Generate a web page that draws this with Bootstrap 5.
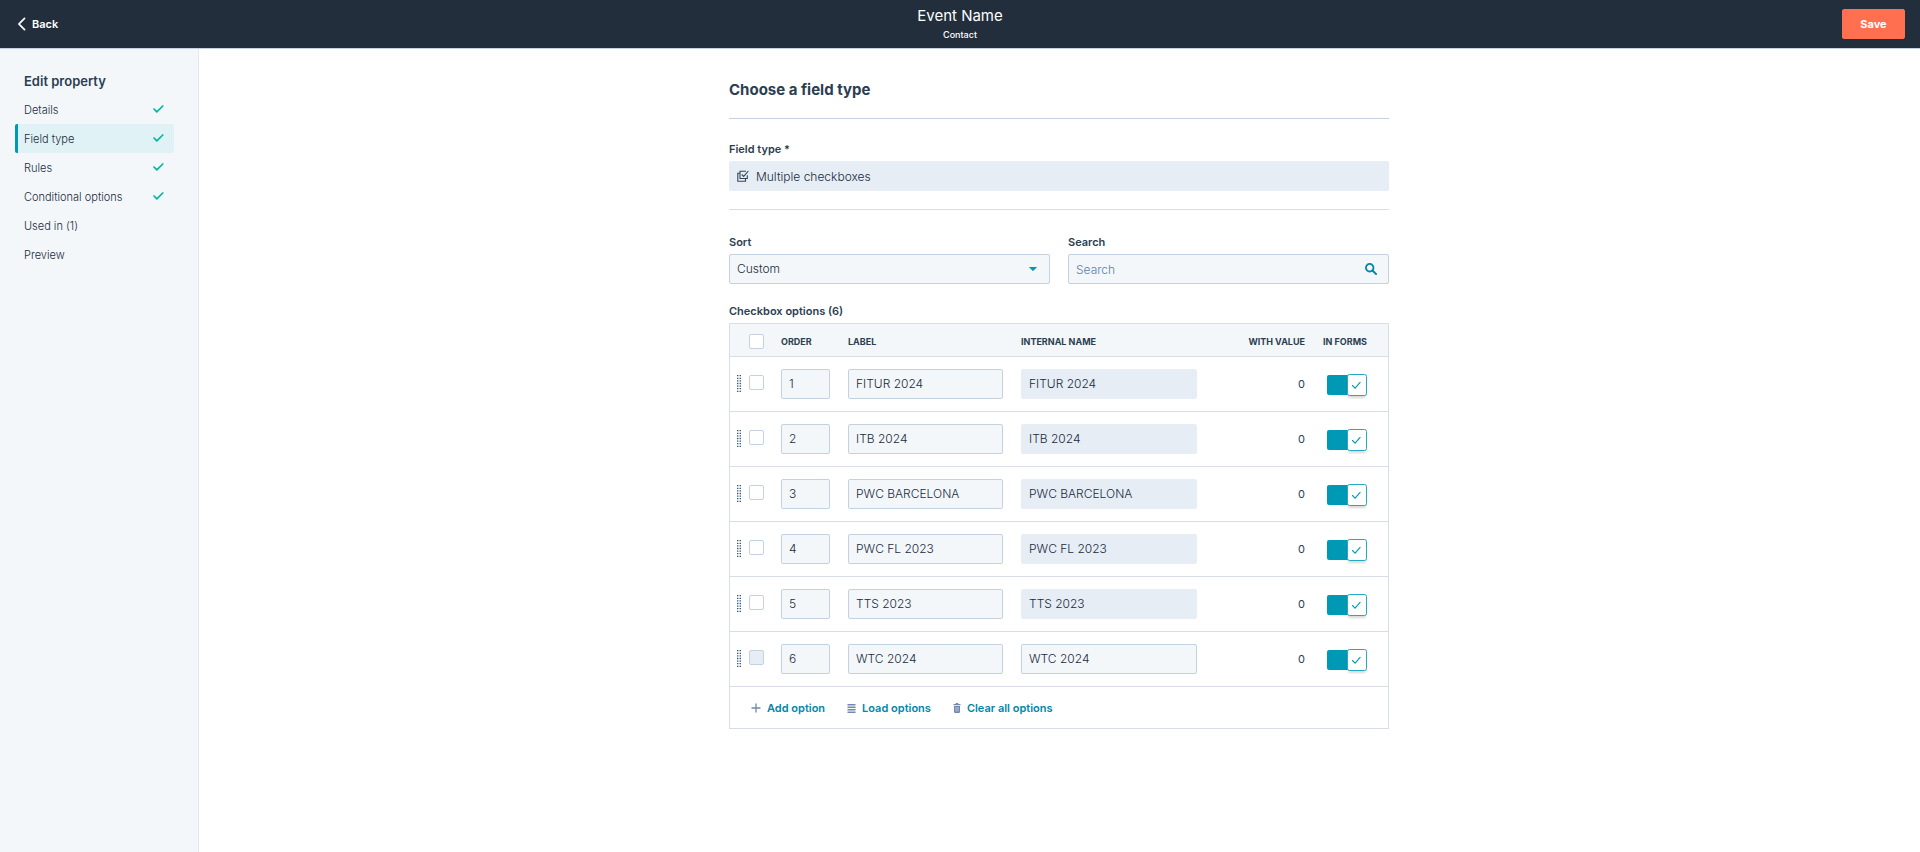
<!DOCTYPE html>
<html lang="en">
<head>
<meta charset="utf-8">
<meta name="viewport" content="width=device-width, initial-scale=1">
<title>Edit property</title>
<link href="https://cdn.jsdelivr.net/npm/bootstrap@5.3.0/dist/css/bootstrap.min.css" rel="stylesheet">
<style>
  :root { --ink: #2b3e52; --soft-ink: #1a2c40; --line: #d9dde8; --edge: #c4d1e0; --pale: #f3f7fa; --mist: #e6edf5; --teal: #0099b5; --deep: #0086a8; }
  body { font-family: Inter, "Liberation Sans", sans-serif; font-size: 11px; line-height: 16px; color: var(--ink); background: #fff; }
  .topbar { background: #222e3c; border-bottom: 1px solid var(--edge); height: 49px; padding: 0 15px 0 18px; }
  .topbar-side { flex: 1 1 0; }
  .topbar-side:first-child { margin-right: -3px; }
  .back-link { font-weight: 600; color: #fff; text-decoration: none; gap: 6px; }
  .page-title { font-size: 15px; line-height: 20px; font-weight: 400; }
  .page-kind { font-size: 9px; line-height: 12px; font-weight: 500; margin: 3px 0 2px; }
  .save-btn { --bs-btn-color: #fff; --bs-btn-bg: #ff6f50; --bs-btn-border-color: #ff6f50; --bs-btn-hover-color: #fff; --bs-btn-hover-bg: #ff8a70; --bs-btn-hover-border-color: #ff8a70; --bs-btn-border-radius: 2px; font-size: 11px; line-height: 16px; font-weight: 700; padding: 6px 16px; min-width: 63px; }
  .sidebar { width: 199px; flex: none; background: var(--pale); border-right: 1px solid #e2e8ef; padding: 22px 24px 24px 15px; }
  .sidebar-title { font-size: 13px; line-height: 20px; font-weight: 600; padding-left: 9px; margin-bottom: 4px; }
  .step-link { color: var(--soft-ink); height: 29px; padding: 0 10px 0 6px; border-left: 3px solid transparent; border-radius: 2px; font-weight: 300; }
  .step-link:hover, .step-link:focus { color: var(--soft-ink); }
  .step-link.active { background: #e0f2f6; border-left-color: var(--teal); }
  .step-link svg { margin-bottom: 2px; }
  .editor-area { padding-right: 1px; }
  .editor { max-width: 660px; width: 100%; padding-top: 31px; }
  .editor-title { font-size: 15px; line-height: 20px; font-weight: 700; margin-bottom: 18px; }
  .rule { border-top: 1px solid var(--line); }
  .rule-strong { border-color: var(--edge); margin-bottom: 22px; }
  .rule-gap { margin-top: 18px; }
  .field-label { font-size: 11px; line-height: 16px; font-weight: 600; margin-bottom: 4px; display: block; }
  .list-label { margin-top: 19px; }
  .pair { --bs-gutter-x: 18px; }
  .field, .field:focus { height: 30px; padding: 0 7px; border: 1px solid var(--edge); border-radius: 2px; background-color: var(--pale); color: var(--soft-ink); font-size: 12px; line-height: 18px; font-weight: 300; box-shadow: none; }
  .field::placeholder { color: #5f80a6; opacity: 1; }
  .field-static, .field-static:focus { background-color: var(--mist); border-color: var(--mist); }
  .field-bare, .field-bare:focus { border: 0; background: transparent; padding: 0; }
  .type-icon { margin-right: 7px; }
  .field-select { background-image: url("data:image/svg+xml,%3Csvg xmlns='http://www.w3.org/2000/svg' viewBox='0 0 8 4'%3E%3Cpath fill='%230099b5' d='M.3 0h7.4q.3.2 0 .5L4.4 3.8q-.4.3-.8 0L.3.5Q0 .2.3 0z'/%3E%3C/svg%3E"); background-size: 8px 4px; background-position: right 12px center; }
  .options-card { border: 1px solid var(--line); }
  .options-table { table-layout: fixed; --bs-table-color: var(--ink); --bs-table-bg: transparent; border-color: var(--line); }
  .options-table > thead { background: var(--pale); }
  .options-table > :not(caption) > * > * { padding: 12px 9px; }
  .options-table > thead > tr > th { padding: 4px 9px 0; height: 32px; font-size: 9px; line-height: 12px; font-weight: 700; vertical-align: middle; text-transform: uppercase; white-space: nowrap; }
  .options-table > tbody > tr > td { vertical-align: middle; }
  .options-table > tbody > tr > td.pick-cell { padding: 18px 8px 0 7px; vertical-align: top; }
  .options-table > thead > tr > th.pick-cell { padding: 4px 8px 0 7px; }
  .options-table > tbody > tr > td.count-cell { font-weight: 400; }
  .col-pick { width: 42px; } .col-order { width: 67px; } .col-label { width: 173px; } .col-name { width: 194px; } .col-forms { width: 74px; }
  .tick { width: 15px; height: 15px; margin: 0; border: 1px solid var(--edge); border-radius: 2px !important; background-color: #fff; float: none; display: block; }
  .tick:disabled { background-color: var(--mist); opacity: 1; }
  .toggle { appearance: none; display: block; width: 40px; height: 30px; margin: 0 0 0 4px; border: 0; background: url("data:image/svg+xml,%3Csvg xmlns='http://www.w3.org/2000/svg' width='40' height='30'%3E%3Cdefs%3E%3Cfilter id='b' x='-30%25' y='-30%25' width='160%25' height='180%25'%3E%3CfeGaussianBlur stdDeviation='1.5'/%3E%3C/filter%3E%3C/defs%3E%3Crect y='6' width='26' height='20' rx='2' fill='%230099b5'/%3E%3Crect x='21' y='10' width='18' height='19' rx='2' fill='%23000' opacity='.16' filter='url(%23b)'/%3E%3Crect x='20.5' y='5.5' width='19' height='21' rx='2' fill='%23fff' stroke='%2326a8c0'/%3E%3Cpath d='M25.5 16.5l2.6 2.7 5-5.8' fill='none' stroke='%230099b5' stroke-width='1.1' stroke-linecap='round'/%3E%3C/svg%3E") no-repeat; }
  .toggle:not(:checked) { filter: grayscale(1); }
  .actions { height: 41px; padding: 2px 21px 0; gap: 22px; }
  .action-btn { --bs-btn-color: var(--deep); --bs-btn-hover-color: var(--teal); --bs-btn-padding-x: 0; --bs-btn-padding-y: 0; --bs-btn-border-width: 0; font-size: 11px; line-height: 16px; font-weight: 600; gap: 6px; }
</style>
</head>
<body class="d-flex flex-column min-vh-100">
<header class="topbar d-flex align-items-center text-white">
  <div class="topbar-side d-flex">
    <a href="#" class="back-link d-flex align-items-center">
      <svg width="8" height="14" viewBox="0 0 8 14" fill="none" stroke="#fff" stroke-width="1.7" stroke-linecap="round" aria-hidden="true"><path d="M6.500 1.300L1 7l5.500 5.700"/></svg>Back</a>
  </div>
  <div class="text-center">
    <h1 class="page-title mb-0">Event Name</h1>
    <div class="page-kind">Contact</div>
  </div>
  <div class="topbar-side d-flex justify-content-end">
    <button type="button" class="btn save-btn">Save</button>
  </div>
</header>

<div class="d-flex flex-grow-1">
  <nav class="sidebar" aria-label="Edit property">
    <h2 class="sidebar-title">Edit property</h2>
    <div class="nav flex-column" id="steps"></div>
  </nav>

  <main class="editor-area flex-grow-1 d-flex justify-content-center">
    <form class="editor">
      <h2 class="editor-title">Choose a field type</h2>
      <div class="rule rule-strong"></div>
      <label class="field-label" for="fieldType">Field type *</label>
      <div class="field field-static d-flex align-items-center">
        <svg class="flex-shrink-0 type-icon" width="12" height="12" viewBox="0 0 12 12" fill="none" stroke="#33475b" aria-hidden="true"><path d="M9 1.200H3v7.300h7.300V5.200M2.800 3.300H.8v7.900h7.700V8.800" stroke-width="1.100"/><path d="M4.700 4.500l2 1.900L11.400 1" stroke-width="1.100"/></svg>
        <input id="fieldType" class="field field-bare flex-grow-1" value="Multiple checkboxes" readonly>
      </div>
      <div class="rule rule-gap pt-4"></div>
      <div class="row pair">
        <div class="col">
          <label class="field-label" for="sort">Sort</label>
          <select id="sort" class="form-select field field-select"><option>Custom</option><option>Alphabetical</option></select>
        </div>
        <div class="col">
          <label class="field-label" for="search">Search</label>
          <div class="field d-flex align-items-center">
            <input id="search" type="text" class="field field-bare flex-grow-1" placeholder="Search">
            <svg class="me-1" width="12" height="12" viewBox="0 0 12 12" fill="none" stroke="#0086a8" aria-hidden="true"><circle cx="4.700" cy="4.700" r="3.800" stroke-width="1.800"/><path d="M7.500 7.500l3.600 3.600" stroke-width="2" stroke-linecap="round"/></svg>
          </div>
        </div>
      </div>
      <div class="field-label list-label">Checkbox options (6)</div>
      <div class="options-card">
        <table class="table options-table mb-0">
          <colgroup><col class="col-pick"><col class="col-order"><col class="col-label"><col class="col-name"><col><col class="col-forms"></colgroup>
          <thead>
            <tr>
              <th class="pick-cell"><input class="form-check-input tick ms-auto" type="checkbox" aria-label="Select all"></th>
              <th>Order</th><th>Label</th><th>Internal name</th><th class="text-end">With value</th><th>In forms</th>
            </tr>
          </thead>
          <tbody id="options"></tbody>
        </table>
        <div class="actions d-flex align-items-center">
          <button type="button" class="btn action-btn d-flex align-items-center"><svg width="10" height="10" viewBox="0 0 10 10" stroke="#7089ad" stroke-width="1.300" stroke-linecap="round" aria-hidden="true"><path d="M5 1v8M1 5h8"/></svg>Add option</button>
          <button type="button" class="btn action-btn d-flex align-items-center"><svg width="9" height="9" viewBox="0 0 9 9" stroke="#7089ad" stroke-width="1.500" aria-hidden="true"><path d="M.5.800h8M.5 3.300h8M.5 5.700h8M.5 8.200h8"/></svg>Load options</button>
          <button type="button" class="btn action-btn d-flex align-items-center"><svg width="8" height="10" viewBox="0 0 8 10" aria-hidden="true"><path fill="#7089ad" d="M2.700 0h2.600v1h2.200v1.300H.5V1h2.200zM1 3h6v5.800Q7 10 5.800 10H2.200Q1 10 1 8.800z"/><path d="M2.800 4v4.600M4 4v4.600M5.200 4v4.600" stroke="#fff" stroke-width=".4"/></svg>Clear all options</button>
        </div>
      </div>
    </form>
  </main>
</div>

<script>
  const check = '<svg width="11" height="8" viewBox="0 0 11 8" fill="none" stroke="#00b99e" stroke-width="1.700" stroke-linecap="round" stroke-linejoin="round" aria-label="Done"><path d="M1 4l2.800 2.900L9.800 1"/></svg>';
  const steps = [["Details", 1], ["Field type", 1], ["Rules", 1], ["Conditional options", 1], ["Used in (1)", 0], ["Preview", 0]];
  document.getElementById("steps").innerHTML = steps.map(([name, done], i) =>
    `<a href="#" class="nav-link step-link d-flex align-items-center justify-content-between${i === 1 ? " active" : ""}">${name}${done ? check : ""}</a>`).join("");

  const dots = Array.from({ length: 7 }, (_, r) => `<path d="M0 ${(r * 2.6 + .7).toFixed(1)}h1.400M2.600 ${(r * 2.6 + .7).toFixed(1)}h1.400"/>`).join("");
  const handle = `<svg width="4" height="17" viewBox="0 0 4 17" stroke="#33557f" stroke-width="1.300" aria-hidden="true">${dots}</svg>`;
  const names = ["FITUR 2024", "ITB 2024", "PWC BARCELONA", "PWC FL 2023", "TTS 2023", "WTC 2024"];
  document.getElementById("options").innerHTML = names.map((name, i) => {
    const isNew = i === names.length - 1;
    return `<tr>
      <td class="pick-cell"><div class="d-flex justify-content-between align-items-start">${handle}<input class="form-check-input tick" type="checkbox" aria-label="Select ${name}"${isNew ? " disabled" : ""}></div></td>
      <td><input class="form-control field" value="${i + 1}" aria-label="Order"></td>
      <td><input class="form-control field" value="${name}" aria-label="Label"></td>
      <td><input class="form-control field${isNew ? "" : " field-static"}" value="${name}" aria-label="Internal name"${isNew ? "" : " readonly"}></td>
      <td class="text-end count-cell">0</td>
      <td><input class="toggle" type="checkbox" role="switch" aria-label="Show ${name} in forms" checked></td>
    </tr>`;
  }).join("");
</script>
<script src="https://cdn.jsdelivr.net/npm/bootstrap@5.3.0/dist/js/bootstrap.bundle.min.js"></script>
</body>
</html>
